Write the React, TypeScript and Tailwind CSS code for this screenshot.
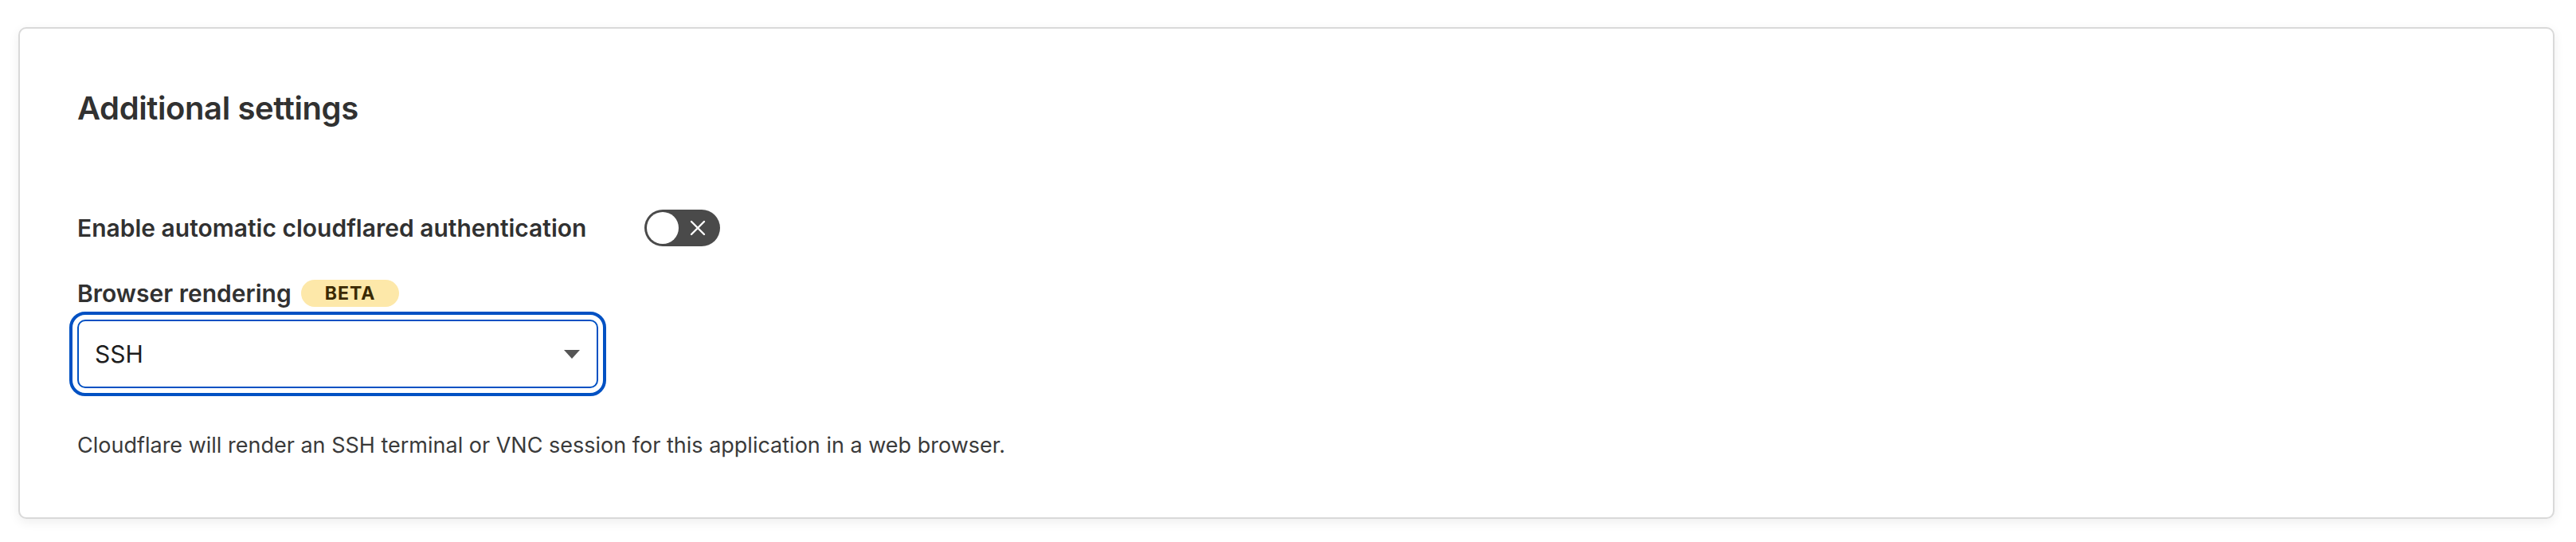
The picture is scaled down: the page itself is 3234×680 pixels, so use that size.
import { useState } from "react";

function Toggle() {
  const [on, setOn] = useState(false);
  return (
    <button
      type="button"
      onClick={() => setOn(!on)}
      className="relative flex h-[46px] w-[95px] items-center rounded-full bg-[#4a4a4a] p-[3px]"
    >
      <span className="h-[40px] w-[40px] rounded-full bg-white"></span>
      <svg
        className="absolute right-[17px] top-[12px]"
        width="22"
        height="22"
        viewBox="0 0 22 22"
        fill="none"
        stroke="white"
        strokeWidth="2.4"
        strokeLinecap="round"
      >
        <path d="M3 3 L19 19 M19 3 L3 19" />
      </svg>
    </button>
  );
}

export default function App() {
  return (
    <div className="min-h-[680px] bg-white pt-[34px] font-['Inter',sans-serif] text-[#313131]">
      {/* Card */}
      <div className="ml-[23px] mr-[27px] rounded-[10px] border-2 border-[#d9d9d9] bg-white px-[72px] pb-[72px] pt-[76px] shadow-[0_4px_14px_rgba(0,0,0,0.07)]">
        <h2 className="text-[40px] font-semibold leading-[48px] tracking-[-0.4px]">Additional settings</h2>

        {/* Toggle row */}
        <div className="mt-[103px] flex items-center">
          <p className="w-[712px] text-[30px] font-semibold leading-[36px]">
            Enable automatic cloudflared authentication
          </p>
          <Toggle />
        </div>

        {/* Browser rendering */}
        <div className="mt-[41px] flex items-center gap-[12px]">
          <p className="text-[30px] font-semibold leading-[36px]">Browser rendering</p>
          <span className="flex h-[34px] items-center rounded-full bg-[#fde8a9] px-[30px] text-[23px] font-bold tracking-[1px] text-[#3b2a02]">
            BETA
          </span>
        </div>

        <div className="mt-[15px] w-[654px] rounded-[10px] outline-4 outline-offset-[6px] outline-[#0051c3]">
          <div className="flex h-[86px] items-center justify-between rounded-[10px] border-2 border-[#0051c3] bg-white pl-[20px] pr-[21px]">
            <span className="text-[30px] leading-[36px] text-[#1d1d1d]">SSH</span>
            <svg width="20" height="11" viewBox="0 0 20 11">
              <path d="M0 0 L20 0 L10 11 Z" fill="#555555" />
            </svg>
          </div>
        </div>

        <p className="mt-[54px] text-[27px] leading-[36px] text-[#3a3a3a]">
          Cloudflare will render an SSH terminal or VNC session for this application in a web browser.
        </p>
      </div>
    </div>
  );
}
